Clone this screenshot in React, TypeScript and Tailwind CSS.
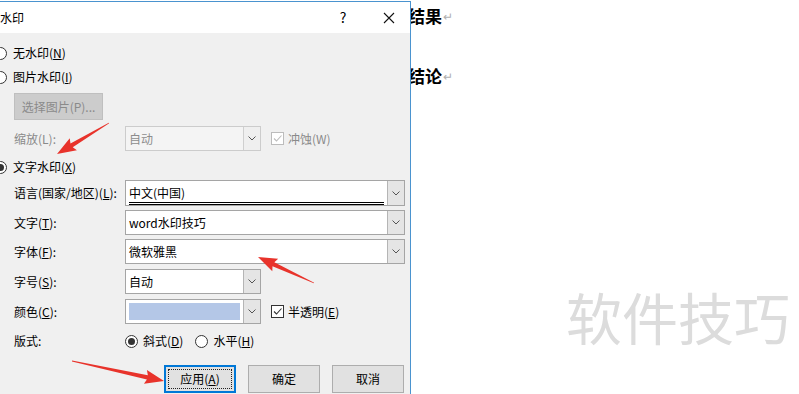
import type { ReactNode } from 'react'

const font = { fontFamily: '"Noto Sans CJK SC", "Noto Sans", sans-serif' }

function Radio({ checked }: { checked?: boolean }) {
  return (
    <span className="flex size-[13px] shrink-0 items-center justify-center rounded-full border border-[#333] bg-white">
      {checked && <span className="size-[7px] rounded-full bg-[#333]" />}
    </span>
  )
}

function Check({ disabled }: { disabled?: boolean }) {
  return (
    <span
      className={`flex size-[13px] shrink-0 items-center justify-center border bg-white ${disabled ? 'border-[#bcbcbc]' : 'border-[#333]'}`}
    >
      <svg viewBox="0 0 11 11" className="size-[11px]">
        <path d="M2 5.5 L4.5 8 L9.5 2.5" fill="none" stroke={disabled ? '#bcbcbc' : '#333'} strokeWidth="1.1" />
      </svg>
    </span>
  )
}

function Chevron({ disabled }: { disabled?: boolean }) {
  return (
    <span
      className={`flex w-[17px] shrink-0 items-center justify-center border-l ${disabled ? 'border-[#cfcfcf] bg-[#efefef]' : 'border-[#b5b5b5] bg-[#e5e5e5]'}`}
    >
      <svg viewBox="0 0 8 5" className="h-[5px] w-[8px]">
        <path d="M0.5 0.5 L4 4 L7.5 0.5" fill="none" stroke="#555" strokeWidth="1" />
      </svg>
    </span>
  )
}

function Combo({ wide, disabled, children }: { wide?: boolean; disabled?: boolean; children?: ReactNode }) {
  return (
    <div
      className={`flex h-full border ${wide ? 'w-[280px]' : 'w-[136px]'} ${disabled ? 'border-[#cccccc] bg-[#f4f4f4] text-[#8d8d8d]' : 'border-[#a5a5a5] bg-white text-black'}`}
    >
      <div className="flex min-w-0 flex-1 items-center px-[3px]">{children}</div>
      <Chevron disabled={disabled} />
    </div>
  )
}

function Field({ label, children, className }: { label: ReactNode; children: ReactNode; className: string }) {
  return (
    <div className={`flex items-center ${className}`}>
      <div className="w-[131px] shrink-0 whitespace-nowrap pl-[20px]">{label}</div>
      {children}
    </div>
  )
}

function Button({ children, focus }: { children: ReactNode; focus?: boolean }) {
  return (
    <div
      className={`flex h-[28px] w-[72px] items-center justify-center bg-[#e1e1e1] ${focus ? 'border-2 border-[#0078d7] p-[2px]' : 'border border-[#adadad]'}`}
    >
      {focus ? (
        <div className="flex h-full w-full items-center justify-center border border-dotted border-[#222]">{children}</div>
      ) : (
        children
      )}
    </div>
  )
}

function arrowPoints(tx: number, ty: number, hx: number, hy: number) {
  const len = Math.hypot(hx - tx, hy - ty)
  const dx = (hx - tx) / len
  const dy = (hy - ty) / len
  const nx = -dy
  const ny = dx
  const headLen = 17
  const headW = 7
  const neckX = hx - dx * headLen
  const neckY = hy - dy * headLen
  const pts = [
    [tx + nx * 0.4, ty + ny * 0.4],
    [neckX + nx * 2.2, neckY + ny * 2.2],
    [neckX + nx * headW - dx * 2, neckY + ny * headW - dy * 2],
    [hx, hy],
    [neckX - nx * headW - dx * 2, neckY - ny * headW - dy * 2],
    [neckX - nx * 2.2, neckY - ny * 2.2],
    [tx - nx * 0.4, ty - ny * 0.4],
  ]
  return pts.map((p) => p.join(',')).join(' ')
}

export default function App() {
  return (
    <div className="relative h-[394px] w-[799px] overflow-hidden bg-white" style={font}>
      {/* document behind */}
      <div className="flex h-full flex-col pl-[408px] text-[17px] font-bold text-black">
        <div className="mt-[4px] flex h-[24px] items-center">
          结果<span className="ml-[1px] text-[12px] font-normal text-[#b0b0b0]">↵</span>
        </div>
        <div className="mt-[36px] flex h-[24px] items-center">
          结论<span className="ml-[1px] text-[12px] font-normal text-[#b0b0b0]">↵</span>
        </div>
        <div className="mt-[200px] pl-[158px] text-[56px] font-normal leading-none text-[#dcdcdc]">
          软件技巧
        </div>
      </div>

      {/* dialog window */}
      <div className="absolute left-[-8px] top-[1px] flex h-[400px] w-[419px] flex-col border border-[#4a93cf] bg-[#f0f0f0] text-[12px] text-black">
        <div className="flex h-[31px] shrink-0 items-center bg-white pl-[7px]">
          <span className="flex-1">水印</span>
          <span className="w-[20px] text-center text-[14px]">?</span>
          <span className="ml-[26px] mr-[11px] flex w-[20px] justify-center">
            <svg viewBox="0 0 12 12" className="size-[12px]">
              <path d="M1 1 L11 11 M11 1 L1 11" stroke="#111" strokeWidth="1.1" />
            </svg>
          </span>
        </div>

        <div className="flex flex-col pl-[1px]">
          <div className="mt-[8px] flex h-[24px] items-center gap-[6px]">
            <Radio />
            <span>
              无水印(<u>N</u>)
            </span>
          </div>
          <div className="flex h-[24px] items-center gap-[6px]">
            <Radio />
            <span>
              图片水印(<u>I</u>)
            </span>
          </div>
          <div className="mt-[4px] pl-[20px]">
            <div className="flex h-[27px] w-[89px] items-center justify-center border border-[#bfbfbf] bg-[#cccccc] text-[#8a8a8a]">
              选择图片(P)...
            </div>
          </div>
          <Field className="mt-[6px] h-[25px]" label={<span className="text-[#8a8a8a]">缩放(L):</span>}>
            <Combo disabled>自动</Combo>
            <div className="ml-[10px] flex items-center gap-[4px] text-[#8a8a8a]">
              <Check disabled />
              冲蚀(W)
            </div>
          </Field>
          <div className="mt-[4px] flex h-[24px] items-center gap-[6px]">
            <Radio checked />
            <span>
              文字水印(<u>X</u>)
            </span>
          </div>
          <Field
            className="mt-[1px] h-[26px]"
            label={
              <span>
                语言(国家/地区)(<u>L</u>):
              </span>
            }
          >
            <Combo wide>
              <div className="flex h-full w-full items-center border-b-[3px] border-double border-black pt-[2px]">中文(中国)</div>
            </Combo>
          </Field>
          <Field
            className="mt-[4px] h-[25px]"
            label={
              <span>
                文字(<u>T</u>):
              </span>
            }
          >
            <Combo wide>word水印技巧</Combo>
          </Field>
          <Field
            className="mt-[4px] h-[25px]"
            label={
              <span>
                字体(<u>F</u>):
              </span>
            }
          >
            <Combo wide>微软雅黑</Combo>
          </Field>
          <Field
            className="mt-[5px] h-[25px]"
            label={
              <span>
                字号(<u>S</u>):
              </span>
            }
          >
            <Combo>自动</Combo>
          </Field>
          <Field
            className="mt-[5px] h-[25px]"
            label={
              <span>
                颜色(<u>C</u>):
              </span>
            }
          >
            <Combo>
              <div className="h-[17px] w-full bg-[#b4c7e7]" />
            </Combo>
            <div className="ml-[10px] flex items-center gap-[4px]">
              <Check />
              <span>
                半透明(<u>E</u>)
              </span>
            </div>
          </Field>
          <Field className="mt-[5px] h-[24px]" label="版式:">
            <div className="flex items-center gap-[5px]">
              <Radio checked />
              <span>
                斜式(<u>D</u>)
              </span>
            </div>
            <div className="ml-[12px] flex items-center gap-[5px]">
              <Radio />
              <span>
                水平(<u>H</u>)
              </span>
            </div>
          </Field>
          <div className="mt-[12px] flex gap-[12px] pl-[170px]">
            <Button focus>
              <span>
                应用(<u>A</u>)
              </span>
            </Button>
            <Button>确定</Button>
            <Button>取消</Button>
          </div>
        </div>
      </div>

      {/* annotation arrows */}
      <svg className="pointer-events-none absolute inset-0" width="799" height="394">
        <polygon points={arrowPoints(109, 123, 57, 154)} fill="#e8332b" />
        <polygon points={arrowPoints(314, 283, 258, 257)} fill="#e8332b" />
        <polygon points={arrowPoints(72, 361, 164, 381)} fill="#e8332b" />
      </svg>
    </div>
  )
}
